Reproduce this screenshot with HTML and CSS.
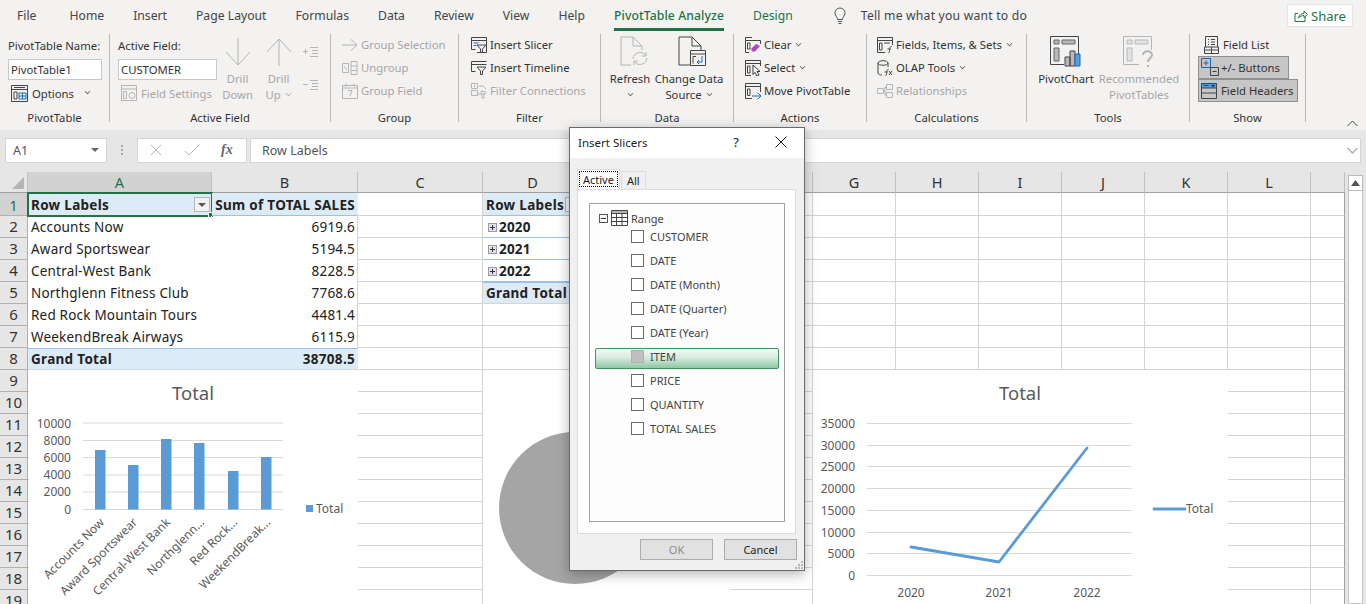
FILE: index.html
```html
<!DOCTYPE html>
<html lang="en">
<head>
<meta charset="UTF-8">
<title>Insert Slicers - Excel</title>
<link rel="stylesheet" href="styles.css">
</head>
<body>

<div class="tabs">
    <span class="tab tab-file">File</span>
    <span class="tab">Home</span>
    <span class="tab">Insert</span>
    <span class="tab">Page Layout</span>
    <span class="tab">Formulas</span>
    <span class="tab">Data</span>
    <span class="tab">Review</span>
    <span class="tab">View</span>
    <span class="tab">Help</span>
    <span class="tab tab-active">PivotTable Analyze</span>
    <span class="tab tab-green">Design</span>
    <span class="tell">
        <svg width="16" height="18" viewBox="0 0 16 18"><path class="ic thin" d="M5.5 12.5c0-2.500-2.500-3.500-2.500-6.500a5 5 0 0 1 10 0c0 3-2.500 4-2.500 6.500zM6 14.500h4M6.500 16.500h3"/></svg>
        <span>Tell me what you want to do</span>
    </span>
    <span class="share">
        <svg width="14" height="14" viewBox="0 0 14 14"><path class="ic green" d="M11 7.500v5H1v-8h3M4.500 9c.5-3 3-4.500 5.500-4.500V2l3.500 3.500L10 8.500V6.500c-2 0-4 .8-5.500 2.500z"/></svg>
        Share
    </span>
</div>

<div class="ribbon">

    <section class="group g-pivot">
        <div class="group-body">
            <div class="stack">
                <div class="line-top">PivotTable Name:</div>
                <input class="field field-name" value="PivotTable1" readonly>
                <div class="line-low">
                    <svg width="17" height="17" viewBox="0 0 17 17"><path class="ic" d="M.5.500h16v16H.5zM.5 4.500h16M3 7h3v7H3zM3 2.500h11"/><path class="ic blue" d="M8 8h7v6H8zM8 11h7M11.500 8v6"/></svg>
                    <span>Options</span><i class="chev chev-wide"></i>
                </div>
            </div>
        </div>
        <div class="group-label">PivotTable</div>
    </section>

    <section class="group g-field">
        <div class="group-body">
            <div class="stack stack-field">
                <div class="line-top">Active Field:</div>
                <input class="field field-active" value="CUSTOMER" readonly>
                <div class="line-low off line-settings">
                    <svg width="16" height="16" viewBox="0 0 16 16"><path class="ic off" d="M.5.500h15v15H.5zM.5 4h15M2.500 6.500h3v7h-3z"/><circle class="ic off" cx="11" cy="10.500" r="3"/></svg>
                    <span>Field Settings</span>
                </div>
            </div>
            <div class="big big-drilldown off">
                <svg width="28" height="30" viewBox="0 0 28 30"><path class="ic off" d="M14 1v27M2 15l12 13 12-13"/></svg>
                <span>Drill</span><span>Down</span>
            </div>
            <div class="big big-drillup off">
                <svg width="28" height="30" viewBox="0 0 28 30"><path class="ic off" d="M14 29V2M2 15L14 2l12 13"/></svg>
                <span>Drill</span><span>Up <i class="chev"></i></span>
            </div>
            <div class="outline-btns">
                <svg width="16" height="12" viewBox="0 0 16 12"><path class="ic off" d="M0 5.500h5M2.500 3v5M7 1.500h8M9 4.500h6M9 7.500h6M7 10.500h8"/></svg>
                <svg width="16" height="12" viewBox="0 0 16 12"><path class="ic off" d="M0 5.500h5M7 1.500h8M9 4.500h6M9 7.500h6M7 10.500h8"/></svg>
            </div>
        </div>
        <div class="group-label">Active Field</div>
    </section>

    <section class="group g-group">
        <div class="group-body">
            <div class="rows off">
                <div class="row">
                    <svg width="16" height="16" viewBox="0 0 16 16"><path class="ic off" d="M0 8h15M9 2.500L15 8l-6 5.500"/></svg>
                    <span>Group Selection</span>
                </div>
                <div class="row">
                    <svg width="16" height="16" viewBox="0 0 16 16"><path class="ic off" d="M.5 3.500h6v9h-6zM9 1.500h6v13H9zM9 6h6M9 10.500h6M2 6l3 4"/></svg>
                    <span>Ungroup</span>
                </div>
                <div class="row">
                    <svg width="16" height="16" viewBox="0 0 16 16"><path class="ic off" d="M.5 2.500h15v13H.5zM.5 5h15M4 .5v3M12 .5v3M6 7.500h4L7.500 13.500"/></svg>
                    <span>Group Field</span>
                </div>
            </div>
        </div>
        <div class="group-label">Group</div>
    </section>

    <section class="group g-filter">
        <div class="group-body">
            <div class="rows">
                <div class="row">
                    <svg width="16" height="16" viewBox="0 0 16 16"><path class="ic" d="M.5.500h15v15H6M.5 3.500h15M.5.500v12h4"/><path class="ic blue" d="M2.500 6h5M2.500 8.500h3"/><path class="ic" d="M6 8h9l-3.500 4v3.500h-2V12z"/></svg>
                    <span>Insert Slicer</span>
                </div>
                <div class="row">
                    <svg width="16" height="16" viewBox="0 0 16 16"><path class="ic" d="M.5 1.500h15M.5 4.500h15M.5 1.500v10h4"/><path class="ic" d="M6 7h9l-3.500 4v3.500h-2V11z"/></svg>
                    <span>Insert Timeline</span>
                </div>
                <div class="row off">
                    <svg width="16" height="16" viewBox="0 0 16 16"><path class="ic off" d="M.5.500h6v5h-6zM.5 7.500h6v5h-6zM3.500 2v2M8 3h4l3 3M7 11h7M10 8l5 1-2 3v3h-2v-3z"/></svg>
                    <span>Filter Connections</span>
                </div>
            </div>
        </div>
        <div class="group-label">Filter</div>
    </section>

    <section class="group g-data">
        <div class="group-body">
            <div class="big big-refresh">
                <svg width="28" height="32" viewBox="0 0 28 32"><path class="ic off" d="M11 29H1V1h12l9 9v4M13 1v9h9"/><path class="ic off" d="M13 23a7 7 0 0 1 13-3M27 22a7 7 0 0 1-13 3M26 16v4h-4M14 29v-4h4"/></svg>
                <span>Refresh</span><span><i class="chev"></i></span>
            </div>
            <div class="big big-change">
                <svg width="28" height="32" viewBox="0 0 28 32"><path class="ic" d="M12 29H1V1h13l9 9v4M14 1v9h9"/><path class="ic" d="M12.500 14.500h15v15h-15zM12.500 18h15M15 20.500h3M15 20.500v7"/><path class="ic blue" d="M24 20v6h-5M21 24l-2 2 2 2"/></svg>
                <span>Change Data</span><span>Source <i class="chev"></i></span>
            </div>
        </div>
        <div class="group-label">Data</div>
    </section>

    <section class="group g-actions">
        <div class="group-body">
            <div class="rows">
                <div class="row">
                    <svg width="16" height="16" viewBox="0 0 16 16"><path class="ic" d="M7 .5h-6.500v15H4M.5 3.500h15V7M2.500 6h2.500v6h-2.500z"/><path d="M6 12l5-5 4 2-5 5.500H7z" fill="#b146c2"/></svg>
                    <span>Clear <i class="chev"></i></span>
                </div>
                <div class="row">
                    <svg width="16" height="16" viewBox="0 0 16 16"><path class="ic" d="M.5.500h15V6M.5.500v15H6M.5 3.500h15M2.500 6h2.500v7h-2.500z"/><path d="M8 5l7 6.500h-3l2 3.500-2 1-2-3.500-2 2z" fill="#fff" stroke="#333"/></svg>
                    <span>Select <i class="chev"></i></span>
                </div>
                <div class="row">
                    <svg width="16" height="16" viewBox="0 0 16 16"><path class="ic" d="M15.500 9V.5h-15v15H7M.5 3.500h15M2.500 6h2.500v6.500h-2.500z"/><path class="ic blue" d="M7 13h9M13 10l3 3-3 3"/></svg>
                    <span>Move PivotTable</span>
                </div>
            </div>
        </div>
        <div class="group-label">Actions</div>
    </section>

    <section class="group g-calc">
        <div class="group-body">
            <div class="rows">
                <div class="row">
                    <svg width="16" height="16" viewBox="0 0 16 16"><path class="ic" d="M15.500 8V.5h-15v15H8M.5 3.500h15M2.500 6h2.500v7h-2.500zM7 6h6"/><path class="ic" d="M11.500 15.500c1 0 1-1 1.200-3s.5-3 1.800-3M10.500 12h3"/></svg>
                    <span>Fields, Items, &amp; Sets <i class="chev"></i></span>
                </div>
                <div class="row">
                    <svg width="16" height="16" viewBox="0 0 16 16"><path class="ic" d="M1 3v10c0 1.500 2 2 4 2M1 3c0-3 10-3 10 0s-10 3-10 0M11 3v4"/><path class="ic" d="M8.500 15.500c1 0 1-1 1.200-3s.5-3 1.800-3M7.500 12h3M12 11l3 4M15 11l-3 4"/></svg>
                    <span>OLAP Tools <i class="chev"></i></span>
                </div>
                <div class="row off">
                    <svg width="16" height="16" viewBox="0 0 16 16"><path class="ic off" d="M.5 5.500h6v5h-6zM9.500 1.500h6v5h-6zM9.500 9.500h6v5h-6zM6.500 8H8M8 4v8M8 4h1.500M8 12h1.500"/></svg>
                    <span>Relationships</span>
                </div>
            </div>
        </div>
        <div class="group-label">Calculations</div>
    </section>

    <section class="group g-tools">
        <div class="group-body">
            <div class="big big-chart">
                <svg width="32" height="32" viewBox="0 0 32 32"><path class="ic" d="M28.500 20V.5H.5v28H14"/><path d="M4 4h5v4H4zM12 4h13v4H12zM4 12h5v13H4z" fill="#b9b9b9" stroke="#666"/><path d="M15 21h5v9h-5zM20 15h5v15h-5z" fill="#b9b9b9" stroke="#444"/><path d="M25 18h5v12h-5z" fill="#5b9bd5" stroke="#0f6cbd"/></svg>
                <span>PivotChart</span>
            </div>
            <div class="big big-reco off">
                <svg width="32" height="32" viewBox="0 0 32 32"><path class="ic off" d="M28.500 14V.5H.5v28H16"/><path d="M4 4h5v4H4zM12 4h13v4H12zM4 12h5v13H4z" fill="#e2e2e2" stroke="#b9b9b9"/><path class="ic off thick" d="M20 19c0-5 9-5 9 0 0 3-4 3-4 7M25 29v2"/></svg>
                <span>Recommended</span><span>PivotTables</span>
            </div>
        </div>
        <div class="group-label">Tools</div>
    </section>

    <section class="group g-show">
        <div class="group-body">
            <div class="show-col">
                <div class="row show-list">
                    <svg width="17" height="18" viewBox="0 0 17 18"><path class="ic" d="M2.500 11V.5h12V11M5 3.500h1M8 3.500h4M5 6h1M8 6h4M5 8.500h1M8 8.500h4M1.500 11h14v6.500h-14zM1.500 14h14M8.500 11v6.500"/></svg>
                    <span>Field List</span>
                </div>
                <div class="row show-on show-plus">
                    <svg width="18" height="19" viewBox="0 0 18 19"><path class="ic blue" d="M.5.500h9v9h-9zM2.500 5h5M5 2.500v5"/><path class="ic" d="M9.500 9.500h8v8h-8zM11.500 13.500h4"/></svg>
                    <span>+/- Buttons</span>
                </div>
                <div class="row show-on show-head">
                    <svg width="16" height="16" viewBox="0 0 16 16"><path d="M0 0h16v5H0z" fill="#5b9bd5"/><path class="ic" d="M.5.500h15v15H.5zM.5 5h15M.5 10h15M2.500 2.500h5"/><path d="M10 2h4l-2 2z" fill="#222"/></svg>
                    <span>Field Headers</span>
                </div>
            </div>
        </div>
        <div class="group-label">Show</div>
    </section>

    <svg class="collapse" width="11" height="7" viewBox="0 0 11 7"><path class="ic" d="M.5 6l5-5 5 5"/></svg>
</div>

<div class="formula-zone">
    <div class="namebox">A1<i class="tri"></i></div>
    <div class="dots"><b></b><b></b><b></b></div>
    <div class="fx-box">
        <svg width="14" height="14" viewBox="0 0 14 14"><path class="ic off" d="M2 2l10 10M12 2L2 12"/></svg>
        <svg width="16" height="14" viewBox="0 0 16 14"><path class="ic off" d="M1 8l4 4L15 2"/></svg>
        <em>fx</em>
    </div>
    <div class="formula">Row Labels</div>
    <svg class="formula-chev" width="11" height="7" viewBox="0 0 11 7"><path d="M.5 1l5 5 5-5" fill="none" stroke="#b4b4b4" stroke-width="1.500"/></svg>
</div>

<div class="sheet">
    <div class="grid-wrap">
        <table class="grid">
            <colgroup>
                <col class="c-head"><col class="c-a"><col class="c-b"><col class="c-c"><col class="c-d"><col class="c-e"><col class="c-std"><col class="c-std"><col class="c-std"><col class="c-std"><col class="c-std"><col class="c-std"><col class="c-std"><col class="c-m">
            </colgroup>
            <tr class="letters"><th class="corner"><i></i></th><th class="sel">A</th><th>B</th><th>C</th><th>D</th><th>E</th><th>F</th><th>G</th><th>H</th><th>I</th><th>J</th><th>K</th><th>L</th><th></th></tr>
            <tr class="first"><th class="sel">1</th><td class="pv-head active-cell">Row Labels<i class="drop"></i><i class="handle"></i></td><td class="pv-head num">Sum of TOTAL SALES</td><td></td><td class="pv-head">Row Labels<i class="drop"></i></td><td></td><td></td><td></td><td></td><td></td><td></td><td></td><td></td><td></td></tr>
            <tr><th>2</th><td class="pv-name">Accounts Now</td><td class="num">6919.6</td><td></td><td class="year"><i class="plus"></i>2020</td><td></td><td></td><td></td><td></td><td></td><td></td><td></td><td></td><td></td></tr>
            <tr><th>3</th><td class="pv-name">Award Sportswear</td><td class="num">5194.5</td><td></td><td class="year"><i class="plus"></i>2021</td><td></td><td></td><td></td><td></td><td></td><td></td><td></td><td></td><td></td></tr>
            <tr><th>4</th><td class="pv-name">Central-West Bank</td><td class="num">8228.5</td><td></td><td class="year"><i class="plus"></i>2022</td><td></td><td></td><td></td><td></td><td></td><td></td><td></td><td></td><td></td></tr>
            <tr><th>5</th><td class="pv-name">Northglenn Fitness Club</td><td class="num">7768.6</td><td></td><td class="pv-total">Grand Total</td><td></td><td></td><td></td><td></td><td></td><td></td><td></td><td></td><td></td></tr>
            <tr><th>6</th><td class="pv-name">Red Rock Mountain Tours</td><td class="num">4481.4</td><td></td><td></td><td></td><td></td><td></td><td></td><td></td><td></td><td></td><td></td><td></td></tr>
            <tr><th>7</th><td class="pv-name">WeekendBreak Airways</td><td class="num">6115.9</td><td></td><td></td><td></td><td></td><td></td><td></td><td></td><td></td><td></td><td></td><td></td></tr>
            <tr><th>8</th><td class="pv-total">Grand Total</td><td class="pv-total num">38708.5</td><td></td><td></td><td></td><td></td><td></td><td></td><td></td><td></td><td></td><td></td><td></td></tr>
            <tr><th>9</th><td></td><td></td><td></td><td></td><td></td><td></td><td></td><td></td><td></td><td></td><td></td><td></td><td></td></tr>
            <tr><th>10</th><td></td><td></td><td></td><td></td><td></td><td></td><td></td><td></td><td></td><td></td><td></td><td></td><td></td></tr>
            <tr><th>11</th><td></td><td></td><td></td><td></td><td></td><td></td><td></td><td></td><td></td><td></td><td></td><td></td><td></td></tr>
            <tr><th>12</th><td></td><td></td><td></td><td></td><td></td><td></td><td></td><td></td><td></td><td></td><td></td><td></td><td></td></tr>
            <tr><th>13</th><td></td><td></td><td></td><td></td><td></td><td></td><td></td><td></td><td></td><td></td><td></td><td></td><td></td></tr>
            <tr><th>14</th><td></td><td></td><td></td><td></td><td></td><td></td><td></td><td></td><td></td><td></td><td></td><td></td><td></td></tr>
            <tr><th>15</th><td></td><td></td><td></td><td></td><td></td><td></td><td></td><td></td><td></td><td></td><td></td><td></td><td></td></tr>
            <tr><th>16</th><td></td><td></td><td></td><td></td><td></td><td></td><td></td><td></td><td></td><td></td><td></td><td></td><td></td></tr>
            <tr><th>17</th><td></td><td></td><td></td><td></td><td></td><td></td><td></td><td></td><td></td><td></td><td></td><td></td><td></td></tr>
            <tr><th>18</th><td></td><td></td><td></td><td></td><td></td><td></td><td></td><td></td><td></td><td></td><td></td><td></td><td></td></tr>
            <tr><th>19</th><td></td><td></td><td></td><td></td><td></td><td></td><td></td><td></td><td></td><td></td><td></td><td></td><td></td></tr>
        </table>

        <!-- charts sit on top of the grid, viewBox uses page coordinates -->
        <svg class="chart chart-bar" viewBox="29 370 329 234">
            <text class="ch-title" x="193" y="400">Total</text>
            <g class="ch-grid">
                <path d="M83 423h200M83 440.500h200M83 457.500h200M83 475h200M83 492h200M83 509.500h200"/>
            </g>
            <g class="ch-ax">
                <text x="71" y="428">10000</text><text x="71" y="445">8000</text><text x="71" y="462">6000</text><text x="71" y="479">4000</text><text x="71" y="496">2000</text><text x="71" y="514">0</text>
            </g>
            <g class="ch-bars">
                <rect x="95" y="450" width="10.500" height="59.500"/>
                <rect x="128" y="465" width="10.500" height="44.500"/>
                <rect x="161" y="439" width="10.500" height="70.500"/>
                <rect x="194" y="443" width="10.500" height="66.500"/>
                <rect x="228" y="471" width="10.500" height="38.500"/>
                <rect x="261" y="457" width="10.500" height="52.500"/>
            </g>
            <g class="ch-cat">
                <text transform="translate(105 523) rotate(-45)">Accounts Now</text>
                <text transform="translate(138 523) rotate(-45)">Award Sportswear</text>
                <text transform="translate(171 523) rotate(-45)">Central-West Bank</text>
                <text transform="translate(205 523) rotate(-45)">Northglenn...</text>
                <text transform="translate(238 523) rotate(-45)">Red Rock...</text>
                <text transform="translate(271 523) rotate(-45)">WeekendBreak...</text>
            </g>
            <rect x="306" y="505" width="7" height="7" fill="#5b9bd5"/>
            <text class="ch-legend" x="316" y="513">Total</text>
        </svg>

        <svg class="chart chart-pie" viewBox="483 370 247 234">
            <circle cx="575" cy="508" r="76" fill="#a5a5a5"/>
        </svg>

        <svg class="chart chart-line" viewBox="813 370 415 234">
            <text class="ch-title" x="1020" y="400">Total</text>
            <g class="ch-grid">
                <path d="M867 423.500h265M867 445.500h265M867 466.500h265M867 488.500h265M867 510.500h265M867 532.500h265M867 553.500h265M867 575.500h265"/>
            </g>
            <g class="ch-ax">
                <text x="855" y="428">35000</text><text x="855" y="450">30000</text><text x="855" y="471">25000</text><text x="855" y="493">20000</text><text x="855" y="515">15000</text><text x="855" y="537">10000</text><text x="855" y="558">5000</text><text x="855" y="580">0</text>
            </g>
            <path class="ch-line" d="M911 547l88 15 88-114"/>
            <g class="ch-x">
                <text x="911" y="597">2020</text><text x="999" y="597">2021</text><text x="1087" y="597">2022</text>
            </g>
            <path class="ch-line" d="M1154 509h31"/>
            <text class="ch-legend" x="1186" y="513">Total</text>
        </svg>
    </div>

    <div class="vscroll">
        <div class="vscroll-up"><svg width="9" height="6" viewBox="0 0 9 6"><path d="M4.500 0L9 6H0z" fill="#555"/></svg></div>
        <div class="vscroll-track"></div>
    </div>
</div>

<div class="dialog">
    <div class="dlg-title">
        <span>Insert Slicers</span>
        <span class="dlg-help">?</span>
        <svg width="12" height="12" viewBox="0 0 12 12"><path d="M.5.500l11 11M11.500.5l-11 11" stroke="#222" fill="none"/></svg>
    </div>
    <div class="dlg-body">
        <div class="dlg-tabs">
            <span class="dlg-tab dlg-tab-on"><span>Active</span></span>
            <span class="dlg-tab">All</span>
        </div>
        <div class="dlg-panel">
            <div class="dlg-list">
                <div class="tree-root">
                    <span class="tree-minus"></span>
                    <svg width="17" height="16" viewBox="0 0 17 16"><path d="M.5.500h16v3H.5z" fill="#b5b5b5"/><path class="ic" d="M.5.500h16v15H.5zM.5 3.500h16M.5 7.500h16M.5 11.500h16M5.500 3.500v12M11 3.500v12"/></svg>
                    <span>Range</span>
                </div>
                <div class="tree-item"><i class="box"></i>CUSTOMER</div>
                <div class="tree-item"><i class="box"></i>DATE</div>
                <div class="tree-item"><i class="box"></i>DATE (Month)</div>
                <div class="tree-item"><i class="box"></i>DATE (Quarter)</div>
                <div class="tree-item"><i class="box"></i>DATE (Year)</div>
                <div class="tree-item tree-sel"><i class="box box-grey"></i>ITEM</div>
                <div class="tree-item"><i class="box"></i>PRICE</div>
                <div class="tree-item"><i class="box"></i>QUANTITY</div>
                <div class="tree-item"><i class="box"></i>TOTAL SALES</div>
            </div>
        </div>
        <div class="dlg-buttons">
            <span class="dlg-btn dlg-btn-off">OK</span>
            <span class="dlg-btn">Cancel</span>
        </div>
        <svg class="grip" width="10" height="10" viewBox="0 0 10 10"><path d="M7 1h2v2H7zM4 4h2v2H4zM7 4h2v2H7zM1 7h2v2H1zM4 7h2v2H4zM7 7h2v2H7z" fill="#b5b5b5"/></svg>
    </div>
</div>

</body>
</html>
```

FILE: styles.css
```css
* {
    box-sizing: border-box;
}

html, body {
    margin: 0;
    height: 604px;
    overflow: hidden;
}

body {
    position: relative;
    background-color: #fff;
    color: #333;
    font-family: "Noto Sans", "Open Sans", sans-serif;
    font-size: 11.3px;
}

i, em {
    font-style: normal;
}

/* icons */
.ic {
    fill: none;
    stroke: #444;
    stroke-width: 1;
}

.ic.off {
    stroke: #b4b4b4;
}

.ic.blue {
    stroke: #0f6cbd;
}

.ic.green {
    stroke: #217346;
}

.ic.thin {
    stroke: #555;
}

.ic.thick {
    stroke-width: 2;
}

/* tab strip */
.tabs {
    display: flex;
    align-items: center;
    height: 31px;
    padding: 0 13px 0 17px;
    background-color: #f3f2f1;
    font-size: 12.2px;
    color: #444;
}

.tab {
    position: relative;
    margin-right: 29px;
    white-space: nowrap;
}

.tab-file {
    margin-right: 33px;
}

.tab-active {
    color: #217346;
    font-weight: 500;
    letter-spacing: .1px;
}

.tab-active::after {
    content: "";
    position: absolute;
    left: 0;
    right: 0;
    bottom: -7px;
    height: 3px;
    background-color: #217346;
}

.tab-green {
    color: #217346;
}

.tell {
    display: flex;
    align-items: center;
    gap: 13px;
    margin-left: 10px;
    letter-spacing: .2px;
}

.share {
    display: flex;
    align-items: center;
    justify-content: center;
    gap: 3px;
    margin-left: auto;
    width: 66px;
    height: 23px;
    background-color: #fff;
    border: 1px solid #e4e3e2;
    border-radius: 2px;
    color: #217346;
    font-size: 13px;
}

/* ribbon */
.ribbon {
    position: relative;
    display: flex;
    height: 99px;
    padding-top: 3px;
    background-color: #f3f2f1;
    box-shadow: 0 2px 3px rgba(0, 0, 0, .15);
}

.group {
    display: flex;
    flex-direction: column;
    height: 88px;
    border-right: 1px solid #b8b8b8;
}

.group-body {
    display: flex;
    height: 76px;
}

.group-label {
    height: 12px;
    line-height: 16px;
    text-align: center;
    white-space: nowrap;
}

.off {
    color: #a6a6a6;
}

.g-pivot { width: 110px; }
.g-field { width: 221px; }
.g-group { width: 128px; }
.g-filter { width: 142px; }
.g-data { width: 133px; }
.g-actions { width: 133px; }
.g-calc { width: 160px; }
.g-tools { width: 163px; }
.g-show { width: 116px; }

.g-pivot .group-body { padding-left: 8px; }
.g-field .group-body { padding-left: 8px; }
.g-group .group-body { padding-left: 11px; }
.g-filter .group-body { padding-left: 12px; }
.g-data .group-body { padding-left: 4px; }
.g-actions .group-body { padding-left: 11px; }
.g-calc .group-body { padding-left: 10px; }
.g-tools .group-body { padding-left: 7px; }
.g-show .group-body { padding-left: 8px; }

.stack {
    display: flex;
    flex-direction: column;
}

.stack-field {
    width: 99px;
}

.line-top {
    height: 25px;
    line-height: 24px;
    white-space: nowrap;
}

.field {
    height: 21px;
    padding: 0 2px;
    border: 1px solid #c8c8c8;
    background-color: #fff;
    color: #333;
    font: inherit;
    outline: none;
}

.field-name {
    width: 94px;
}

.field-active {
    width: 99px;
}

.line-low {
    display: flex;
    align-items: center;
    gap: 4px;
    height: 22px;
    margin-top: 2px;
    padding-left: 3px;
    white-space: nowrap;
}

.chev {
    display: inline-block;
    width: 5px;
    height: 5px;
    margin: 0 1px 3px 2px;
    border-right: 1px solid #555;
    border-bottom: 1px solid #555;
    transform: rotate(45deg) scale(.8);
}

.off .chev {
    border-color: #a6a6a6;
}

.chev-wide {
    margin-left: 7px;
}

.big {
    display: flex;
    flex-direction: column;
    align-items: center;
    line-height: 16px;
    white-space: nowrap;
}

.big svg {
    flex: none;
    height: 32px;
    margin: 2px 0 3px;
}

.big-refresh svg {
    margin-left: 7px;
}

.big-change svg {
    margin-left: 5px;
}

.big-drilldown { width: 41px; }
.big-drillup { width: 41px; }
.big-refresh { width: 50px; }
.big-change { width: 68px; }
.big-chart { width: 64px; }
.big-reco { width: 82px; }

.outline-btns {
    display: flex;
    flex-direction: column;
    gap: 21px;
    margin: 12px 0 0 4px;
}

.rows {
    display: flex;
    flex-direction: column;
    margin-top: -1px;
}

.show-col {
    display: flex;
    flex-direction: column;
}

.row {
    display: flex;
    align-items: center;
    gap: 3px;
    height: 23px;
    white-space: nowrap;
}

.show-list {
    height: 22px;
    padding: 0 0 1px 5px;
}

.show-on {
    background-color: #c6c6c6;
    border: 1px solid #8f8f8f;
    color: #333;
}

.show-plus {
    width: 91px;
    padding-left: 2px;
    gap: 2px;
}

.show-head {
    width: 100px;
    padding-left: 2px;
    gap: 4px;
}

.collapse {
    position: absolute;
    right: 8px;
    bottom: 3px;
}

/* name box and formula bar */
.formula-zone {
    position: relative;
    display: flex;
    align-items: center;
    height: 42px;
    padding: 0 5px 2px;
    background-color: #e6e6e6;
    font-size: 12.5px;
    color: #555;
}

.namebox,
.fx-box,
.formula {
    height: 25px;
    background-color: #fff;
    border: 1px solid #d4d4d4;
}

.namebox {
    display: flex;
    align-items: center;
    justify-content: space-between;
    width: 102px;
    padding: 0 7px;
}

.tri {
    width: 0;
    height: 0;
    border-left: 4px solid transparent;
    border-right: 4px solid transparent;
    border-top: 4px solid #666;
}

.dots {
    display: flex;
    flex-direction: column;
    gap: 2px;
    width: 30px;
    align-items: center;
}

.dots b {
    width: 2px;
    height: 2px;
    background-color: #aaa;
}

.fx-box {
    display: flex;
    align-items: center;
    gap: 21px;
    width: 110px;
    padding-left: 11px;
}

.fx-box em {
    font-family: "Liberation Serif", serif;
    font-style: italic;
    font-size: 14px;
    font-weight: 700;
    color: #666;
}

.formula {
    flex: 1;
    margin-left: 3px;
    padding-left: 11px;
    line-height: 23px;
}

.formula-chev {
    position: absolute;
    right: 8px;
    top: 17px;
}

/* sheet */
.sheet {
    display: flex;
    height: 432px;
    overflow: hidden;
}

.grid-wrap {
    position: relative;
    width: 1345px;
}

.grid {
    table-layout: fixed;
    width: 1345px;
    border-collapse: separate;
    border-spacing: 0;
    font-size: 13.5px;
    letter-spacing: .2px;
    color: #222;
}

.c-head { width: 28px; }
.c-a { width: 184px; }
.c-b { width: 146px; }
.c-c { width: 125px; }
.c-d { width: 100px; }
.c-e { width: 147px; }
.c-std { width: 83px; }
.c-m { width: 34px; }

.grid tr {
    height: 22px;
}

.grid tr.letters {
    height: 21px;
}

.grid tr.first {
    height: 23px;
}

.grid tr.first td,
.grid tr.first th {
    padding-top: 2px;
}

.grid td {
    position: relative;
    padding: 0 3px;
    border-right: 1px solid #d4d4d4;
    border-bottom: 1px solid #d4d4d4;
    white-space: nowrap;
    overflow: visible;
}

.grid td:last-child {
    border-right-color: #a0a0a0;
}

.grid th {
    padding: 0;
    background-color: #e6e6e6;
    border-right: 1px solid #b1b1b1;
    border-bottom: 1px solid #b1b1b1;
    font-weight: 400;
    font-size: 15px;
    letter-spacing: 0;
    color: #333;
    line-height: 1;
    text-align: center;
}

.grid .letters th {
    font-size: 14.5px;
    border-right-color: #c0c0c0;
    border-bottom-color: #a0a0a0;
}

.grid th.sel {
    background-color: #d2d2d2;
    color: #217346;
}

.corner {
    position: relative;
}

.corner i {
    position: absolute;
    right: 3px;
    bottom: 3px;
    width: 0;
    height: 0;
    border-left: 12px solid transparent;
    border-bottom: 12px solid #b4b4b4;
}

.grid td.num {
    padding-right: 2px;
    text-align: right;
    border-bottom-color: #fff;
}

.grid .pv-name {
    border-right-color: #fff;
    border-bottom-color: #fff;
}

.grid td.pv-head,
.grid td.pv-total {
    background-color: #ddebf7;
    font-weight: 700;
    letter-spacing: .3px;
    border-right-color: #ddebf7;
    border-bottom-color: #9bc2e6;
}

.grid td.pv-head.num {
    padding-left: 0;
}

.grid td.pv-total {
    border-top: 1px solid #9bc2e6;
    border-bottom-color: #d4d4d4;
}

.grid .year {
    padding-left: 5px;
    font-weight: 700;
    border-bottom-color: #9bc2e6;
}

.plus {
    display: inline-block;
    position: relative;
    width: 9px;
    height: 9px;
    margin-right: 2px;
    background-color: #dde2ea;
    border: 1px solid #99a;
    vertical-align: 0;
}

.plus::before {
    content: "";
    position: absolute;
    left: 1px;
    top: 3px;
    width: 5px;
    height: 1px;
    background-color: #333;
}

.plus::after {
    content: "";
    position: absolute;
    left: 3px;
    top: 1px;
    width: 1px;
    height: 5px;
    background-color: #333;
}

.grid td.active-cell {
    outline: 2px solid #217346;
    outline-offset: -1px;
}

.drop {
    position: absolute;
    top: 4px;
    right: 1px;
    width: 16px;
    height: 15px;
    background-color: #f2f2f2;
    border: 1px solid #b5b5b5;
}

.drop::after {
    content: "";
    position: absolute;
    left: 3px;
    top: 5px;
    border-left: 4px solid transparent;
    border-right: 4px solid transparent;
    border-top: 4px solid #555;
}

.handle {
    position: absolute;
    right: -3px;
    bottom: -3px;
    width: 6px;
    height: 6px;
    background-color: #217346;
    border: 1px solid #fff;
}

.chart {
    position: absolute;
    top: 198px;
    height: 234px;
    background-color: #fff;
    font-family: "Noto Sans", sans-serif;
}

.chart-bar { left: 29px; width: 329px; }
.chart-pie { left: 483px; width: 247px; }
.chart-line { left: 813px; width: 415px; }

.ch-title {
    font-size: 18.5px;
    fill: #595959;
    text-anchor: middle;
}

.ch-grid path {
    fill: none;
    stroke: #d9d9d9;
}

.ch-ax text {
    font-size: 12px;
    fill: #595959;
    text-anchor: end;
}

.ch-x text {
    font-size: 12px;
    fill: #595959;
    text-anchor: middle;
}

.ch-cat text {
    font-size: 12px;
    fill: #595959;
    text-anchor: end;
}

.ch-bars rect {
    fill: #5b9bd5;
}

.ch-legend {
    font-size: 12px;
    fill: #595959;
}

.ch-line {
    fill: none;
    stroke: #5b9bd5;
    stroke-width: 2.800;
    stroke-linecap: round;
    stroke-linejoin: round;
}

.vscroll {
    flex: 1;
    display: flex;
    flex-direction: column;
    padding: 3px 3px 0 3px;
    background-color: #e6e6e6;
}

.vscroll-up {
    display: flex;
    align-items: center;
    justify-content: center;
    flex: none;
    height: 16px;
    background-color: #fff;
    border: 1px solid #bbb;
}

.vscroll-track {
    flex: 1;
    background-color: #fff;
    border: 1px solid #c8c8c8;
    border-top: none;
}

/* insert slicers dialog */
.dialog {
    position: absolute;
    left: 569px;
    top: 127px;
    width: 236px;
    height: 444px;
    display: flex;
    flex-direction: column;
    background-color: #f0f0f0;
    border: 1px solid #6a6a6a;
    box-shadow: 0 3px 12px rgba(0, 0, 0, .3);
    font-size: 11px;
    color: #222;
}

.dlg-title {
    display: flex;
    align-items: center;
    height: 30px;
    padding: 0 17px 2px 8px;
    background-color: #fff;
}

.dlg-title span:first-child {
    flex: 1;
    font-size: 11.5px;
}

.dlg-help {
    margin-right: 36px;
    font-size: 13px;
}

.dlg-body {
    position: relative;
    flex: 1;
    padding: 11px 7px 0 7px;
}

.dlg-tabs {
    display: flex;
    align-items: flex-end;
    height: 20px;
}

.dlg-tab {
    height: 18px;
    padding: 0 5px;
    line-height: 18px;
    background-color: #f0f0f0;
    border: 1px solid #dcdcdc;
    border-bottom: none;
}

.dlg-tab-on {
    height: 20px;
    padding: 1px;
    background-color: #fff;
    margin-right: 1px;
}

.dlg-tab-on span {
    display: block;
    padding: 0 3px;
    height: 16px;
    line-height: 15px;
    border: 1px dotted #000;
}

.dlg-panel {
    height: 345px;
    width: 219px;
    padding: 13px 10px 0 11px;
    background-color: #fff;
    border: 1px solid #dcdcdc;
}

.dlg-list {
    position: relative;
    height: 319px;
    padding: 5px 5px 0 5px;
    background-color: #fdfdfd;
    border: 1px solid #a0a0a0;
    color: #444;
}

.tree-root {
    display: flex;
    align-items: center;
    gap: 3px;
    height: 18px;
    padding-left: 4px;
}

.tree-minus {
    position: relative;
    width: 9px;
    height: 9px;
    border: 1px solid #555;
}

.tree-minus::after {
    content: "";
    position: absolute;
    left: 1px;
    top: 3px;
    width: 5px;
    height: 1px;
    background-color: #333;
}

.tree-item {
    display: flex;
    align-items: center;
    gap: 6px;
    height: 24px;
    padding-left: 36px;
}

.tree-root + .tree-item {
    margin-top: -3px;
}

.tree-item.tree-sel {
    height: 21px;
    margin: 4px 0 -1px;
    padding: 0 0 4px 35px;
    background: linear-gradient(#f3faf5, #d7ecdf 45%, #8fc7a5);
    border: 1px solid #3f9467;
    border-radius: 2px;
}

.box {
    flex: none;
    width: 13px;
    height: 13px;
    background-color: #fff;
    border: 1px solid #6a6a6a;
}

.box-grey {
    background-color: #c0c0c0;
    border-color: #b0b0b0;
}

.dlg-buttons {
    display: flex;
    justify-content: flex-end;
    gap: 11px;
    margin-top: 5px;
}

.dlg-btn {
    width: 73px;
    height: 21px;
    line-height: 19px;
    text-align: center;
    background-color: #e1e1e1;
    border: 1px solid #adadad;
}

.dlg-btn-off {
    color: #8a8a8a;
}

.grip {
    position: absolute;
    right: 0;
    bottom: 0;
}
```
